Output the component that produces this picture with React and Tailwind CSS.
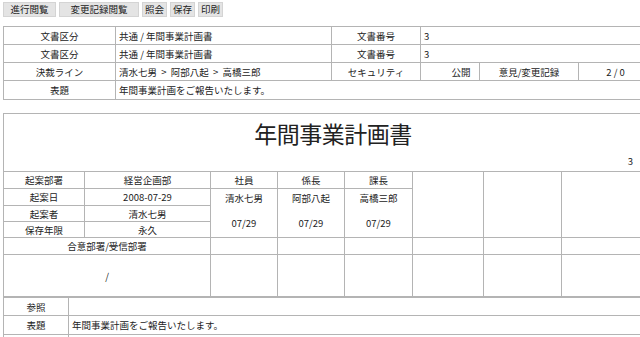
const buttons = [
  { label: "進行閲覧", w: "w-[53px]" },
  { label: "変更記録閲覧", w: "w-[80px]" },
  { label: "照会", w: "w-[25px]" },
  { label: "保存", w: "w-[25px]" },
  { label: "印刷", w: "w-[25px]" },
];

const approvers = [
  { role: "社員", name: "清水七男", date: "07/29" },
  { role: "係長", name: "阿部八起", date: "07/29" },
  { role: "課長", name: "高橋三郎", date: "07/29" },
];

const cell = "border border-[#b4b4b4] p-0";
const label = `${cell} text-center`;
const value = `${cell} pl-[3px] text-left`;

function TopTable() {
  return (
    <table className="w-[660px] table-fixed border-collapse">
      <colgroup>
        <col className="w-[112px]" />
        <col className="w-[216px]" />
        <col className="w-[89px]" />
        <col className="w-[59px]" />
        <col className="w-[99px]" />
        <col />
      </colgroup>
      <tbody>
        {[0, 1].map((i) => (
          <tr key={i} className="h-[18px]">
            <td className={label}>文書区分</td>
            <td className={value}>共通 / 年間事業計画書</td>
            <td className={label}>文書番号</td>
            <td className={value} colSpan={3}>3</td>
          </tr>
        ))}
        <tr className="h-[18px]">
          <td className={label}>決裁ライン</td>
          <td className={`${value} whitespace-pre`}>清水七男  &gt;  阿部八起  &gt;  高橋三郎</td>
          <td className={label}>セキュリティ</td>
          <td className={`${label} pl-[22px]`}>公開</td>
          <td className={label}>意見/変更記録</td>
          <td className={`${label} pr-[10px]`}>2 / 0</td>
        </tr>
        <tr className="h-[19px]">
          <td className={label}>表題</td>
          <td className={value} colSpan={5}>年間事業計画をご報告いたします。</td>
        </tr>
      </tbody>
    </table>
  );
}

function ApprovalTable() {
  return (
    <table className="w-[660px] table-fixed border-collapse">
      <colgroup>
        <col className="w-[81px]" />
        <col className="w-[126px]" />
        <col className="w-[67px]" />
        <col className="w-[67px]" />
        <col className="w-[68px]" />
        <col className="w-[71px]" />
        <col className="w-[78px]" />
        <col />
      </colgroup>
      <tbody>
        <tr className="h-[58px]">
          <td className={`${cell} align-top`} colSpan={8}>
            <div className="flex h-[57px] flex-col">
              <div className="pt-[4px] text-center text-[23px] leading-[30px] tracking-[-0.5px]">
                年間事業計画書
              </div>
              <div className="mt-auto pb-[4px] pr-[29px] text-right">3</div>
            </div>
          </td>
        </tr>
        <tr className="h-[17px]">
          <td className={label}>起案部署</td>
          <td className={label}>経営企画部</td>
          {approvers.map((a) => (
            <td key={a.role} className={label}>{a.role}</td>
          ))}
          <td className={cell} rowSpan={4} />
          <td className={cell} rowSpan={4} />
          <td className={cell} rowSpan={4} />
        </tr>
        <tr className="h-[17px]">
          <td className={label}>起案日</td>
          <td className={label}>2008-07-29</td>
          {approvers.map((a) => (
            <td key={a.role} className={`${label} align-top`} rowSpan={3}>
              <div className="pt-[3px]">{a.name}</div>
              <div className="mt-[13px]">{a.date}</div>
            </td>
          ))}
        </tr>
        <tr className="h-[16px]">
          <td className={label}>起案者</td>
          <td className={label}>清水七男</td>
        </tr>
        <tr className="h-[16px]">
          <td className={label}>保存年限</td>
          <td className={label}>永久</td>
        </tr>
        <tr className="h-[17px]">
          <td className={label} colSpan={2}>合意部署/受信部署</td>
          {[0, 1, 2, 3, 4, 5].map((i) => (
            <td key={i} className={cell} />
          ))}
        </tr>
        <tr className="h-[42px]">
          <td className={label} colSpan={2}>/</td>
          {[0, 1, 2, 3, 4, 5].map((i) => (
            <td key={i} className={cell} />
          ))}
        </tr>
      </tbody>
    </table>
  );
}

function RefTable() {
  return (
    <table className="w-[660px] table-fixed border-collapse">
      <colgroup>
        <col className="w-[65px]" />
        <col />
      </colgroup>
      <tbody>
        <tr className="h-[18px]">
          <td className={label}>参照</td>
          <td className={value} />
        </tr>
        <tr className="h-[19px]">
          <td className={label}>表題</td>
          <td className={value}>年間事業計画をご報告いたします。</td>
        </tr>
        <tr className="h-[20px]">
          <td className={label} />
          <td className={value} />
        </tr>
      </tbody>
    </table>
  );
}

export default function App() {
  return (
    <div className="h-[337px] w-[640px] overflow-hidden bg-white text-[9.5px] leading-[12px] text-[#222] font-['Noto_Sans_CJK_JP',sans-serif]">
      <div className="flex h-[26px] gap-[3px] pl-[3px] pt-[2px]">
        {buttons.map((b) => (
          <button
            key={b.label}
            className={`${b.w} h-[15px] border border-[#d4d4d4] bg-[#e4e4e4] text-center text-[9.5px] leading-[13px] text-[#222]`}
          >
            {b.label}
          </button>
        ))}
      </div>
      <div className="pl-[3px]">
        <TopTable />
      </div>
      <div className="mt-[13px] pl-[3px]">
        <ApprovalTable />
        <RefTable />
      </div>
    </div>
  );
}
